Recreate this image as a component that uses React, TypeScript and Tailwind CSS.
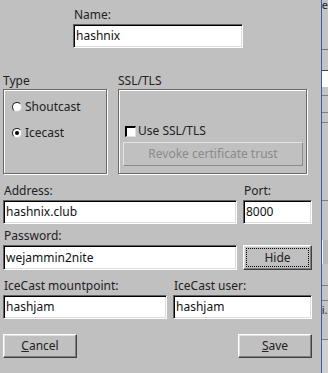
const sunken =
  'bg-white border border-t-[#606060] border-l-[#606060] border-b-white border-r-white shadow-[inset_1px_1px_0_#000,inset_-1px_-1px_0_#dcdcdc]';
const raised =
  'border border-t-white border-l-white border-b-[#404040] border-r-[#404040] shadow-[inset_-1px_-1px_0_#808080,inset_1px_1px_0_#dfdfdf]';
const groove = 'border border-[#6a6a6a] shadow-[inset_1px_1px_0_#ffffff,1px_1px_0_#ffffff]';

function Field({ value, className }: { value: string; className: string }) {
  return (
    <div className={`${sunken} ${className} h-[24px] flex items-center pl-[2px] text-[12px] text-[#111]`}>
      {value}
    </div>
  );
}

function Label({ text, className = '' }: { text: string; className?: string }) {
  return <div className={`h-[16px] leading-[16px] text-[12px] text-[#222] ${className}`}>{text}</div>;
}

function Radio({ checked, label }: { checked?: boolean; label: string }) {
  return (
    <div className="flex items-center h-[16px]">
      <span className="ml-[8px] w-[10px] h-[10px] rounded-full bg-white border border-t-[#202020] border-l-[#202020] border-b-[#c8c8c8] border-r-[#c8c8c8] flex items-center justify-center">
        {checked && <span className="w-[4px] h-[4px] rounded-full bg-black" />}
      </span>
      <span className="ml-[3px] text-[12px] text-[#222]">{label}</span>
    </div>
  );
}

export default function App() {
  return (
    <div className="w-[328px] h-[373px] bg-[#c0c0c0] flex overflow-hidden" style={{ fontFamily: '"Noto Sans", sans-serif' }}>
      <div className="w-[322px] flex flex-col pl-[3px]">
        {/* Name */}
        <div className="ml-[70px] mt-[7px] w-[170px] flex flex-col">
          <Label text="Name:" className="pl-[1px]" />
          <Field value="hashnix" className="mt-[1px] w-[170px]" />
        </div>

        {/* Type / SSL */}
        <div className="flex mt-[25px] gap-[11px]">
          <div className="w-[104px] flex flex-col">
            <Label text="Type" />
            <div className={`${groove} h-[85px] flex flex-col pt-[9px] gap-[10px]`}>
              <Radio label="Shoutcast" />
              <Radio label="Icecast" checked />
            </div>
          </div>
          <div className="w-[189px] flex flex-col">
            <Label text="SSL/TLS" />
            <div className={`${groove} h-[85px] flex flex-col px-[4px] pt-[33px]`}>
              <div className="flex items-center h-[16px]">
                <span className="ml-[2px] w-[11px] h-[11px] bg-white border-t-2 border-l-2 border-t-black border-l-black border-b border-r border-b-[#e0e0e0] border-r-[#e0e0e0]" />
                <span className="ml-[2px] text-[12px] text-[#222]">Use SSL/TLS</span>
              </div>
              <div className="mt-[3px] h-[24px] w-[180px] border border-t-[#e4e4e4] border-l-[#e4e4e4] border-b-[#8c8c8c] border-r-[#8c8c8c] flex items-center justify-center text-[12px] text-[#8a8a8a]">
                Revoke certificate trust
              </div>
            </div>
          </div>
        </div>

        {/* Address / Port */}
        <div className="flex mt-[9px] gap-[6px]">
          <div className="flex flex-col w-[234px]">
            <Label text="Address:" className="pl-[1px]" />
            <Field value="hashnix.club" className="mt-[1px] w-[234px]" />
          </div>
          <div className="flex flex-col w-[69px]">
            <Label text="Port:" className="pl-[1px]" />
            <Field value="8000" className="mt-[1px] w-[69px]" />
          </div>
        </div>

        {/* Password */}
        <Label text="Password:" className="mt-[4px] pl-[1px]" />
        <div className="flex mt-[1px] gap-[6px]">
          <Field value="wejammin2nite" className="w-[234px] h-[25px]" />
          <div className={`${raised} w-[69px] h-[25px] p-[2px] bg-[#c0c0c0]`}>
            <div className="h-full border border-dotted border-black flex items-center justify-center text-[12px] text-[#222]">
              Hide
            </div>
          </div>
        </div>

        {/* Mountpoint / user */}
        <div className="flex mt-[8px] gap-[6px]">
          <div className="flex flex-col w-[164px]">
            <Label text="IceCast mountpoint:" className="pl-[1px]" />
            <Field value="hashjam" className="mt-[1px] w-[164px]" />
          </div>
          <div className="flex flex-col w-[139px]">
            <Label text="IceCast user:" className="pl-[1px]" />
            <Field value="hashjam" className="mt-[1px] w-[139px]" />
          </div>
        </div>

        {/* Buttons */}
        <div className="flex justify-between mt-[15px] w-[309px]">
          <div className={`${raised} w-[74px] h-[24px] flex items-center justify-center text-[12px] text-[#222]`}>
            <span><span className="underline">C</span>ancel</span>
          </div>
          <div className={`${raised} w-[74px] h-[24px] flex items-center justify-center text-[12px] text-[#222]`}>
            <span><span className="underline">S</span>ave</span>
          </div>
        </div>
      </div>

      {/* window behind */}
      <div className="w-[1px] bg-[#2f5fb8]" />
      <div className="flex-1 flex flex-col bg-[#c4c4c4]">
        <div className="h-[10px] text-[11px] leading-[10px] text-[#222] overflow-hidden">e</div>
        <div className="h-[39px]" />
        <div className="h-[1px] bg-[#707070]" />
        <div className="h-[20px]" />
        <div className="h-[17px] bg-white border-t border-[#404040]" />
        <div className="h-[8px]" />
        <div className="h-[1px] bg-[#808080]" />
        <div className="h-[16px]" />
        <div className="h-[1px] bg-[#808080]" />
        <div className="h-[9px]" />
        <div className="h-[1px] bg-[#808080]" />
        <div className="h-[77px]" />
        <div className="h-[1px] bg-[#808080]" />
        <div className="h-[39px]" />
        <div className="h-[24px] border-l border-[#f0f0f0] bg-[#b8b8b8]" />
        <div className="h-[21px]" />
        <div className="h-[1px] bg-[#808080]" />
        <div className="h-[14px]" />
        <div className="h-[1px] bg-[#808080]" />
        <div className="h-[18px] text-[11px] leading-[18px] text-[#222] overflow-hidden">i.</div>
        <div className="h-[20px]" />
        <div className="h-[1px] bg-[#808080]" />
        <div className="flex-1 bg-[#d0d0d0]" />
      </div>
    </div>
  );
}
